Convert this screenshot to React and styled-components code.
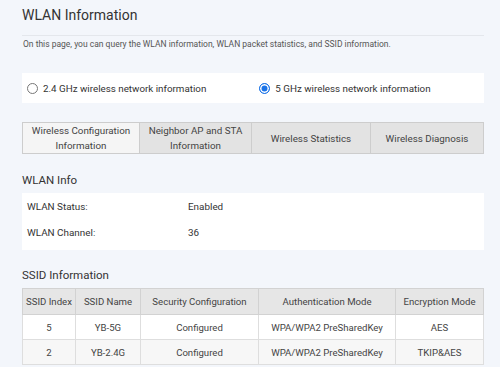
import React, { useState } from 'react';
import styled, { createGlobalStyle } from 'styled-components';

const GlobalStyle = createGlobalStyle`
	html, body {
		margin: 0;
		padding: 0;
		background: #f3f6fb;
		font-family: Roboto, "Liberation Sans", Arial, sans-serif;
	}
`;

const tabs = [
	'Wireless Configuration Information',
	'Neighbor AP and STA Information',
	'Wireless Statistics',
	'Wireless Diagnosis',
];

const ssidRows = [
	{ index: '5', name: 'YB-5G', security: 'Configured', auth: 'WPA/WPA2 PreSharedKey', enc: 'AES' },
	{ index: '2', name: 'YB-2.4G', security: 'Configured', auth: 'WPA/WPA2 PreSharedKey', enc: 'TKIP&AES' },
];

const App = () => {
	const [band, setBand] = useState('5');
	const [activeTab, setActiveTab] = useState(0);

	return (
		<>
			<GlobalStyle />
			<Page>
				<Title>WLAN Information</Title>
				<Description>
					On this page, you can query the WLAN information, WLAN packet statistics, and SSID information.
				</Description>

				<RadioPanel>
					<RadioOption onClick={() => setBand('2.4')}>
						<RadioCircle $checked={band === '2.4'} />
						2.4 GHz wireless network information
					</RadioOption>
					<RadioOption onClick={() => setBand('5')}>
						<RadioCircle $checked={band === '5'} />
						5 GHz wireless network information
					</RadioOption>
				</RadioPanel>

				<TabBar>
					{tabs.map((t, i) => (
						<Tab key={t} $active={activeTab === i} onClick={() => setActiveTab(i)}>
							{t}
						</Tab>
					))}
				</TabBar>

				<SectionTitle>WLAN Info</SectionTitle>
				<InfoBox>
					<InfoRow>
						<span>WLAN Status:</span>
						<span>Enabled</span>
					</InfoRow>
					<InfoRow>
						<span>WLAN Channel:</span>
						<span>36</span>
					</InfoRow>
				</InfoBox>

				<SectionTitle $gap={17}>SSID Information</SectionTitle>
				<Table>
					<colgroup>
						<col style={{ width: 53 }} />
						<col style={{ width: 65 }} />
						<col style={{ width: 118 }} />
						<col style={{ width: 137 }} />
						<col />
					</colgroup>
					<thead>
						<tr>
							<Th>SSID Index</Th>
							<Th>SSID Name</Th>
							<Th>Security Configuration</Th>
							<Th>Authentication Mode</Th>
							<Th>Encryption Mode</Th>
						</tr>
					</thead>
					<tbody>
						{ssidRows.map((r, i) => (
							<Tr key={r.index} $odd={i % 2 === 1}>
								<Td>{r.index}</Td>
								<Td>{r.name}</Td>
								<Td>{r.security}</Td>
								<Td>{r.auth}</Td>
								<Td>{r.enc}</Td>
							</Tr>
						))}
					</tbody>
				</Table>
			</Page>
		</>
	);
};

const Page = styled.div`
	box-sizing: border-box;
	width: 500px;
	padding: 5px 16px 0 22px;
	color: #333;
`;

const Title = styled.h1`
	margin: 0;
	font-size: 14px;
	font-weight: 400;
	line-height: 20px;
	color: #333;
	padding-bottom: 10px;
	border-bottom: 1px solid #e4e7ec;
`;

const Description = styled.p`
	margin: 0;
	padding: 1px 0 0 1px;
	font-size: 8.5px;
	line-height: 14px;
	color: #555;
`;

const RadioPanel = styled.div`
	margin-top: 22px;
	height: 30px;
	background: #fff;
	display: flex;
	align-items: center;
	padding-left: 5px;
	gap: 53px;
`;

const RadioOption = styled.label`
	display: flex;
	align-items: center;
	font-size: 9.8px;
	color: #333;
	cursor: pointer;
`;

const RadioCircle = styled.span`
	box-sizing: border-box;
	width: 11px;
	height: 11px;
	border-radius: 50%;
	margin-right: 5px;
	border: 1px solid ${(p) => (p.$checked ? '#1a73e8' : '#777')};
	background: ${(p) => (p.$checked ? '#1a73e8' : '#fff')};
	box-shadow: ${(p) => (p.$checked ? 'inset 0 0 0 1.5px #fff' : 'none')};
`;

const TabBar = styled.div`
	margin-top: 19px;
	display: grid;
	grid-template-columns: 116px 112px 119px 1fr;
	border: 1px solid #cdcdcd;
`;

const Tab = styled.div`
	height: 30px;
	display: flex;
	align-items: center;
	justify-content: center;
	text-align: center;
	font-size: 9.8px;
	line-height: 15px;
	padding: 0 4px;
	color: #444;
	background: ${(p) => (p.$active ? '#f5f5f5' : '#e3e3e3')};
	border-left: 1px solid #cdcdcd;
	cursor: pointer;
	&:first-child {
		border-left: none;
	}
`;

const SectionTitle = styled.h2`
	margin: ${(p) => p.$gap || 18}px 0 0;
	font-size: 11.5px;
	font-weight: 400;
	line-height: 16px;
	color: #333;
	padding-bottom: 5px;
`;

const InfoBox = styled.div`
	background: #fff;
	padding: 0 0 5px 5px;
`;

const InfoRow = styled.div`
	display: grid;
	grid-template-columns: 161px 1fr;
	height: 26px;
	align-items: center;
	font-size: 9.9px;
	color: #333;
`;

const Table = styled.table`
	width: 100%;
	border-collapse: collapse;
	table-layout: fixed;
	background: #fff;
	font-size: 9.6px;
	color: #444;
	margin-top: 0;
`;

const Th = styled.th`
	height: 25px;
	font-weight: 400;
	background: #e6e6e6;
	border: 1px solid #d2d2d2;
	text-align: center;
	padding: 0;
	white-space: nowrap;
`;

const Tr = styled.tr`
	background: ${(p) => (p.$odd ? '#f7f7f7' : '#fff')};
`;

const Td = styled.td`
	height: 24px;
	border: 1px solid #dedede;
	text-align: center;
	padding: 0;
	white-space: nowrap;
`;

export default App;
